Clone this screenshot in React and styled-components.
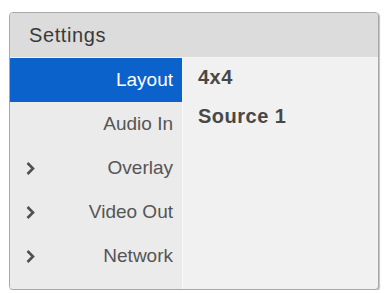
import styled, { createGlobalStyle } from "styled-components";

const GlobalStyle = createGlobalStyle`
  body {
    margin: 0;
    background: #ffffff;
    font-family: "Liberation Sans", Arial, sans-serif;
  }
`;

const menu = [
  { label: "Layout", active: true },
  { label: "Audio In" },
  { label: "Overlay", more: true },
  { label: "Video Out", more: true },
  { label: "Network", more: true },
];

const values = ["4x4", "Source 1"];

function Chevron() {
  return (
    <svg width="11" height="15" viewBox="0 0 11 15">
      <polyline
        points="2.5,2 8,7.5 2.5,13"
        fill="none"
        stroke="#505050"
        strokeWidth="2.6"
      />
    </svg>
  );
}

export default function App() {
  return (
    <Page>
      <GlobalStyle />
      <Panel>
        <Header>Settings</Header>
        <Body>
          <Sidebar>
            {menu.map((item) => (
              <MenuRow key={item.label} $active={item.active}>
                <Arrow>{item.more && <Chevron />}</Arrow>
                <span>{item.label}</span>
              </MenuRow>
            ))}
          </Sidebar>
          <Pane>
            {values.map((v) => (
              <Value key={v}>{v}</Value>
            ))}
          </Pane>
        </Body>
      </Panel>
    </Page>
  );
}

const Page = styled.div`
  padding: 12px 0 0 9px;
`;

const Panel = styled.div`
  width: 370px;
  height: 278px;
  box-sizing: border-box;
  border: 1px solid #a8a8a8;
  border-radius: 4px;
  box-shadow: 1px 1px 1px rgba(0, 0, 0, 0.25);
  overflow: hidden;
  display: flex;
  flex-direction: column;
  background: #f1f1f1;
`;

const Header = styled.div`
  height: 44px;
  flex: none;
  display: flex;
  align-items: center;
  padding-left: 19px;
  background: #dcdcdc;
  border-bottom: 1px solid #f4f4f4;
  color: #3a3a3a;
  font-size: 20px;
  letter-spacing: 0.6px;
`;

const Body = styled.div`
  flex: 1;
  display: flex;
`;

const Sidebar = styled.div`
  width: 172px;
  background: #ebebeb;
  border-right: 1px solid #f7f7f7;
  display: flex;
  flex-direction: column;
`;

const MenuRow = styled.div`
  height: 44px;
  display: flex;
  align-items: center;
  justify-content: space-between;
  padding: 0 9px 0 15px;
  font-size: 19px;
  color: ${(p) => (p.$active ? "#ffffff" : "#555555")};
  background: ${(p) => (p.$active ? "#0c62cb" : "transparent")};
`;

const Arrow = styled.span`
  display: flex;
  align-items: center;
  width: 11px;
`;

const Pane = styled.div`
  flex: 1;
  display: flex;
  flex-direction: column;
  padding: 0 0 0 15px;
`;

const Value = styled.div`
  height: 39px;
  display: flex;
  align-items: center;
  font-size: 20px;
  font-weight: bold;
  letter-spacing: 0.5px;
  color: #484848;
`;
